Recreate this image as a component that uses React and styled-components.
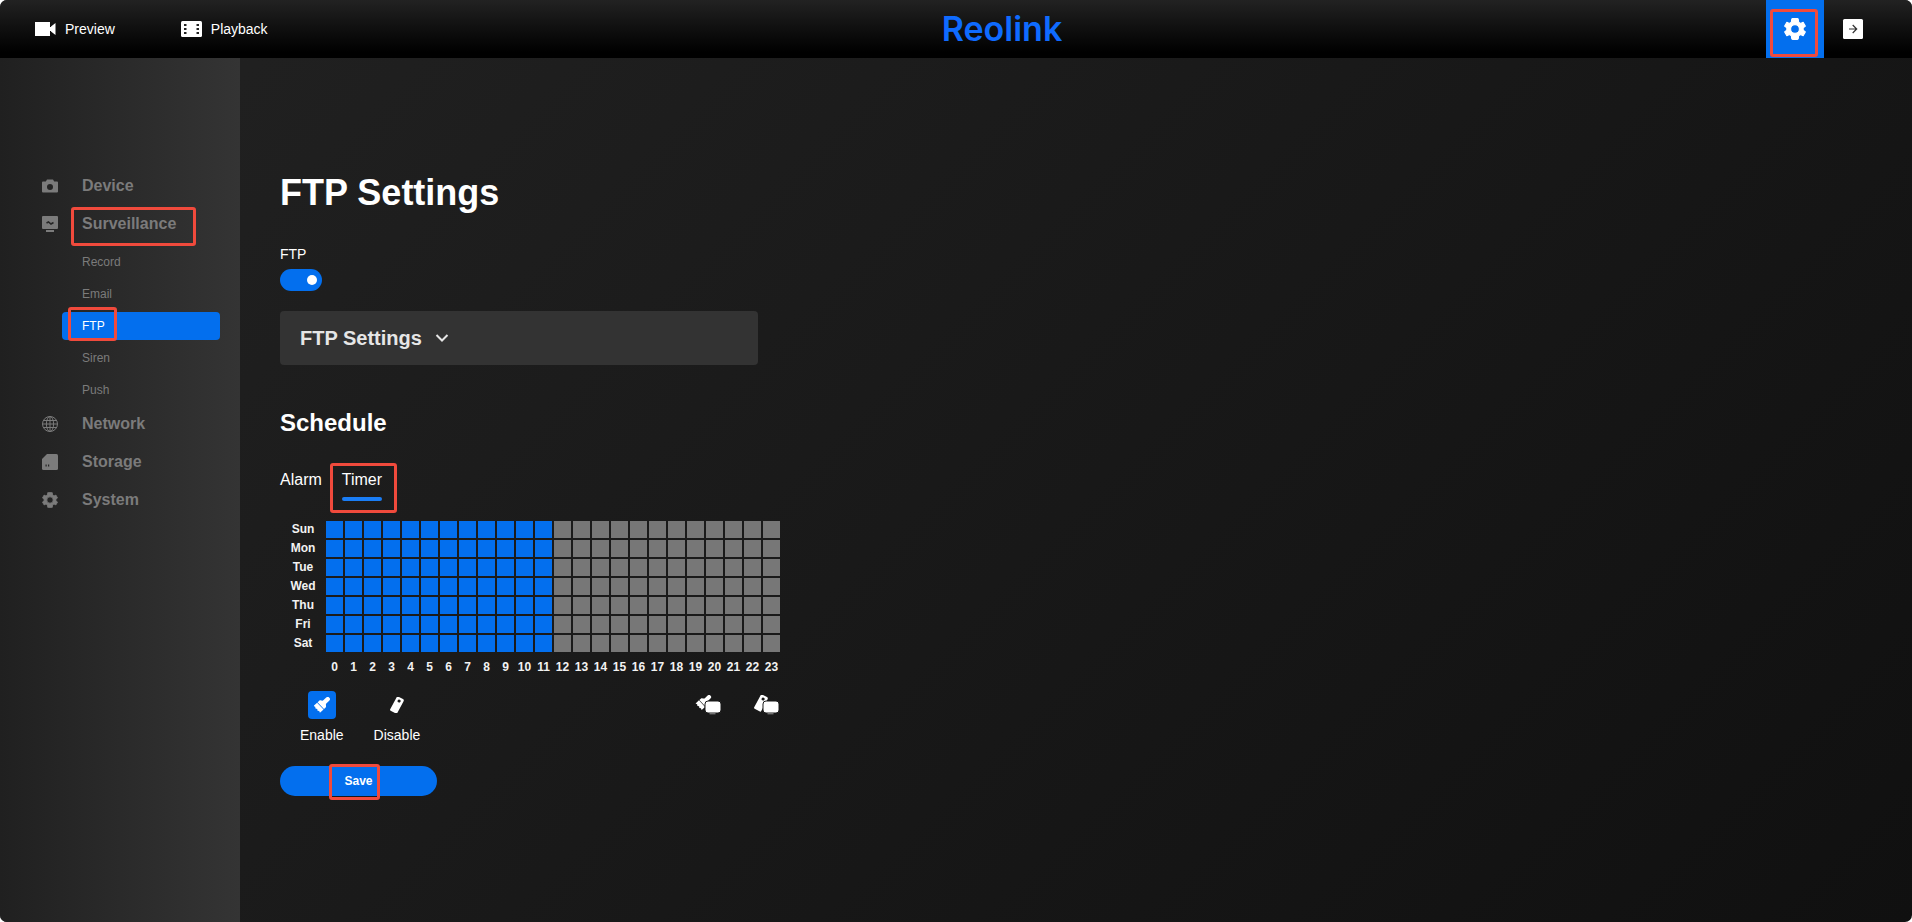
import React, { useState } from 'react'
import styled, { createGlobalStyle } from 'styled-components'

const BLUE = '#036fee'
const MARK = '#f04a3c'

const GlobalStyle = createGlobalStyle`
    * {
        box-sizing: border-box;
    }
    body {
        margin: 0;
        background: #fff;
        font-family: "Liberation Sans", Arial, sans-serif;
    }
    button {
        margin: 0;
        padding: 0;
        border: 0;
        background: none;
        color: inherit;
        font: inherit;
        cursor: pointer;
    }
`;

const Page = styled.div`
    display: flex;
    flex-direction: column;
    min-height: 100vh;
    border-radius: 7px;
    overflow: hidden;
    color: #fff;
    background: linear-gradient(135deg, #222 0%, #101010 100%);
`;

const Header = styled.header`
    display: grid;
    grid-template-columns: 1fr auto 1fr;
    align-items: center;
    height: 58px;
    background: linear-gradient(#222, #000 90%);
`;

const TopNav = styled.nav`
    display: flex;
    align-items: center;
    gap: 66px;
    padding-left: 34px;
`;

const TopLink = styled.a`
    display: flex;
    align-items: center;
    gap: 9px;
    color: #fff;
    font-size: 14px;
    text-decoration: none;
`;

const Logo = styled.div`
    margin-left: 92px;
    color: #0f6bff;
    font-family: Inter, sans-serif;
    font-size: 34px;
    font-weight: 600;
    line-height: 58px;
`;

const Actions = styled.div`
    display: flex;
    justify-content: flex-end;
    padding-right: 30px;
`;

const ActionButton = styled.button`
    position: relative;
    display: flex;
    align-items: center;
    justify-content: center;
    width: 58px;
    height: 58px;
    background: ${props => props.$active ? BLUE : 'transparent'};
`;

const Highlight = styled.span`
    position: absolute;
    top: ${props => props.$top}px;
    left: ${props => props.$left}px;
    width: ${props => props.$width}px;
    height: ${props => props.$height}px;
    border: 3px solid ${MARK};
    border-radius: 3px;
    pointer-events: none;
`;

const Body = styled.div`
    display: flex;
    flex: 1;
`;

const Sidebar = styled.nav`
    flex: none;
    width: 240px;
    padding: 108px 20px 40px 0;
    background: linear-gradient(90deg, #202020, #343434);
`;

const MenuItem = styled.a`
    position: relative;
    display: flex;
    align-items: center;
    gap: 24px;
    height: 38px;
    padding: 2px 0 0 42px;
    color: #7b7b7b;
    font-size: 16px;
    font-weight: bold;
    text-decoration: none;
`;

const SubMenu = styled.div`
    display: flex;
    flex-direction: column;
    gap: 4px;
    padding: 6px 0 0 62px;
`;

const SubItem = styled.a`
    position: relative;
    height: 28px;
    padding-left: 20px;
    border-radius: 4px;
    background: ${props => props.$active ? BLUE : 'transparent'};
    color: ${props => props.$active ? '#fff' : '#7b7b7b'};
    font-size: 12px;
    line-height: 28px;
    text-decoration: none;
`;

const Main = styled.main`
    flex: 1;
    padding: 113px 40px 60px;
`;

const Title = styled.h1`
    margin: 0;
    font-size: 36px;
    line-height: 44px;
`;

const SwitchField = styled.label`
    display: flex;
    flex-direction: column;
    align-items: flex-start;
    gap: 6px;
    margin-top: 31px;
    font-size: 14px;
    line-height: 17px;
`;

const Switch = styled.input`
    appearance: none;
    display: flex;
    align-items: center;
    justify-content: flex-end;
    width: 42px;
    height: 22px;
    margin: 0;
    padding: 0 5px;
    border-radius: 11px;
    background: ${BLUE};
    cursor: pointer;

    &::before {
        content: '';
        width: 10px;
        height: 10px;
        border-radius: 50%;
        background: #fff;
    }
    &:not(:checked) {
        justify-content: flex-start;
        background: #777;
    }
`;

const Panel = styled.button`
    display: flex;
    align-items: center;
    gap: 13px;
    width: 100%;
    max-width: 478px;
    height: 54px;
    margin-top: 20px;
    padding: 0 20px;
    border-radius: 4px;
    background: #333;
    color: #e6e6e6;
    font-size: 20px;
    font-weight: bold;
`;

const Subtitle = styled.h2`
    margin: 44px 0 0;
    font-size: 24px;
    line-height: 28px;
`;

const Tabs = styled.div`
    display: flex;
    gap: 20px;
    margin-top: 34px;
`;

const Tab = styled.button`
    position: relative;
    height: 30px;
    border-bottom: 4px solid transparent;
    font-size: 16px;
    line-height: 18px;
    padding-bottom: 8px;

    &::after {
        content: '';
        position: absolute;
        right: 0;
        bottom: -4px;
        left: 0;
        height: 4px;
        border-radius: 2px;
        background: ${props => props.$active ? '#1a7df5' : 'transparent'};
    }
`;

const Schedule = styled.table`
    width: 502px;
    margin-top: 18px;
    border-spacing: 2px;
    table-layout: fixed;
    font-size: 12px;
    line-height: 17px;
    user-select: none;
`;

const DayCol = styled.col`
    width: 42px;
`;

const Day = styled.th`
    height: 17px;
    padding: 0;
    color: #f2f2f2;
`;

const Hour = styled(Day)`
    height: 27px;
`;

const Slot = styled.td`
    height: 17px;
    padding: 0;
    background: ${props => props.$on ? BLUE : '#777'};
    cursor: pointer;
`;

const Tools = styled.div`
    display: flex;
    align-items: flex-start;
    justify-content: space-between;
    width: 500px;
    margin-top: 8px;
    padding-left: 20px;
`;

const ToolGroup = styled.div`
    display: flex;
    gap: 30px;
`;

const Tool = styled.button`
    display: flex;
    flex-direction: column;
    align-items: center;
    gap: 8px;
    font-size: 14px;
    line-height: 17px;
`;

const ToolIcon = styled.span`
    display: flex;
    align-items: center;
    justify-content: center;
    width: 28px;
    height: 28px;
    border-radius: 4px;
    background: ${props => props.$active ? BLUE : 'transparent'};
`;

const SaveButton = styled.button`
    position: relative;
    display: block;
    width: 157px;
    height: 30px;
    margin-top: 22px;
    border-radius: 15px;
    background: ${BLUE};
    font-size: 12px;
    font-weight: bold;
`;

const PreviewIcon = () => (
    <svg width="22" height="14" viewBox="0 0 22 14" fill="#fff">
        <path d="M1 0h15v14H1zM17 4.500L21.500 1v12L17 9.500z" />
        <path d="M15.500 5h2v4h-2z" />
    </svg>
)

const PlaybackIcon = () => (
    <svg width="21" height="16" viewBox="0 0 21 16">
        <rect width="21" height="16" rx="1.500" fill="#fff" />
        <path d="M3 3h2.500v2H3zM3 7h2.500v2H3zM3 11h2.500v2H3zM15.500 3H18v2h-2.500zM15.500 7H18v2h-2.500zM15.500 11H18v2h-2.500z" fill="#222" />
    </svg>
)

const GearIcon = ({ size }) => (
    <svg width={size} height={size} viewBox="2 2 20 20" fill="currentColor">
        <path fillRule="evenodd" strokeLinejoin="round" stroke="currentColor" strokeWidth="1" d="M19.400 13c.1-.6.1-1.400 0-2l2-1.600-2-3.500-2.400 1c-.5-.4-1.100-.7-1.700-1L15 3.400C14.900 2.600 14.600 2.500 14 2.500h-4c-.6 0-.9.1-1 .9l-.3 2.500c-.6.3-1.200.6-1.700 1l-2.400-1-2 3.500 2 1.600c-.1.6-.1 1.400 0 2l-2 1.600 2 3.500 2.400-1c.5.4 1.100.7 1.700 1l.3 2.500c.1.800.4.9 1 .9h4c.6 0 .9-.1 1-.9l.3-2.500c.6-.3 1.200-.6 1.700-1l2.400 1 2-3.500zM12 16a4 4 0 1 1 0-8 4 4 0 0 1 0 8z" />
    </svg>
)

const ExitIcon = () => (
    <svg width="22" height="20" viewBox="0 0 22 20">
        <rect x="1" width="20" height="20" rx="1.500" fill="#fff" />
        <path d="M7 10h7.500M10.700 6l4 4-4 4" fill="none" stroke="#333" strokeWidth="1.200" />
    </svg>
)

const CameraIcon = () => (
    <svg width="16" height="16" viewBox="0 0 16 16" fill="currentColor">
        <path fillRule="evenodd" d="M5 1.500h6l1.200 2H15a1 1 0 0 1 1 1V13.500a1 1 0 0 1-1 1H1a1 1 0 0 1-1-1V4.500a1 1 0 0 1 1-1h2.800zM8 6a3 3 0 1 0 0 6 3 3 0 0 0 0-6z" />
    </svg>
)

const MonitorIcon = () => (
    <svg width="16" height="16" viewBox="0 0 16 16">
        <path d="M1 0h14a1 1 0 0 1 1 1v11a1 1 0 0 1-1 1H1a1 1 0 0 1-1-1V1a1 1 0 0 1 1-1zM4 14h8v2H4z" fill="currentColor" />
        <path d="M4.500 7l2-1 2.500 2 2.500-1.500" fill="none" stroke="#262626" strokeWidth="1.600" />
    </svg>
)

const GlobeIcon = () => (
    <svg width="16" height="16" viewBox="0 0 16 16" fill="none" stroke="currentColor" strokeWidth="1">
        <circle cx="8" cy="8" r="7.500" />
        <ellipse cx="8" cy="8" rx="3.600" ry="7.500" />
        <path d="M8 0.500v15M0.500 8h15M1.600 4.500h12.800M1.600 11.500h12.800" />
    </svg>
)

const CardIcon = () => (
    <svg width="16" height="16" viewBox="0 0 16 16">
        <path d="M5 0h9.500A1.500 1.500 0 0 1 16 1.500v13a1.500 1.500 0 0 1-1.500 1.500h-13A1.500 1.500 0 0 1 0 14.500V5z" fill="currentColor" />
        <path d="M3.500 10.500h1.200v2H3.500zM6 10.500h1.200v2H6z" fill="#262626" />
    </svg>
)

const ChevronIcon = () => (
    <svg width="14" height="10" viewBox="0 0 14 10" fill="none" stroke="currentColor" strokeWidth="2">
        <path d="M1.500 2L7 7.500 12.500 2" />
    </svg>
)

const BrushShape = () => (
    <g transform="translate(7.500 8) rotate(47)" fill="#fff">
        <path d="M-2.200 -8.500a2.200 2.200 0 0 1 4.400 0V-4.500C2.200 -3 4.700 -3 4.700 -1V1H-4.700V-1C-4.700 -3 -2.200 -3 -2.200 -4.500z" />
        <path d="M-4.700 1.600H4.700V6.500L2.800 5.800 1.500 6.800 0 5.800 -1.500 6.800 -3 5.800 -4.700 6.500z" />
    </g>
)

const BrushIcon = () => (
    <svg width="16" height="16" viewBox="0 0 16 16">
        <BrushShape />
    </svg>
)

const EraserShape = () => (
    <g transform="rotate(28 7 8)">
        <path fillRule="evenodd" d="M4.500 0h5a1.500 1.500 0 0 1 1.500 1.500V15a1 1 0 0 1-1 1H4a1 1 0 0 1-1-1V1.500A1.500 1.500 0 0 1 4.500 0zM7 2a1.500 1.500 0 1 0 0 3 1.500 1.500 0 0 0 0-3z" fill="#fff" />
    </g>
)

const EraserIcon = () => (
    <svg width="14" height="16" viewBox="0 0 14 16">
        <EraserShape />
    </svg>
)

const ScreenShape = () => (
    <g>
        <path d="M14.500 17h6v2.200h-6z" fill="#ccc" />
        <rect x="10" y="6" width="16" height="12" rx="3" fill="#fff" stroke="#1b1b1b" strokeWidth="1" />
    </g>
)

const BrushAllIcon = () => (
    <svg width="26" height="20" viewBox="0 0 26 20">
        <g transform="translate(1 0) scale(.95)"><BrushShape /></g>
        <ScreenShape />
    </svg>
)

const EraserAllIcon = () => (
    <svg width="26" height="20" viewBox="0 0 26 20">
        <g transform="translate(1 0)"><EraserShape /></g>
        <ScreenShape />
    </svg>
)

const days = ['Sun', 'Mon', 'Tue', 'Wed', 'Thu', 'Fri', 'Sat']
const hours = Array.from({ length: 24 }, (_, i) => i)
const subItems = ['Record', 'Email', 'FTP', 'Siren', 'Push']

export default function App() {
    const [slots, setSlots] = useState(() => days.map(() => hours.map(h => h < 12)))
    const [tool, setTool] = useState('enable')

    const paint = (day, hour) => {
        setSlots(slots.map((row, d) => row.map((on, h) => (
            d === day && h === hour ? tool === 'enable' : on
        ))))
    }

    const fill = (on) => setSlots(days.map(() => hours.map(() => on)))

    return (
        <Page>
            <GlobalStyle />
            <Header>
                <TopNav>
                    <TopLink href="#preview"><PreviewIcon />Preview</TopLink>
                    <TopLink href="#playback"><PlaybackIcon />Playback</TopLink>
                </TopNav>
                <Logo>Reolink</Logo>
                <Actions>
                    <ActionButton $active aria-label="Settings">
                        <GearIcon size={22} />
                        <Highlight $top={9} $left={4} $width={48} $height={48} />
                    </ActionButton>
                    <ActionButton aria-label="Log out"><ExitIcon /></ActionButton>
                </Actions>
            </Header>

            <Body>
                <Sidebar>
                    <MenuItem href="#device"><CameraIcon />Device</MenuItem>
                    <MenuItem href="#surveillance">
                        <MonitorIcon />Surveillance
                        <Highlight $top={3} $left={71} $width={125} $height={39} />
                    </MenuItem>
                    <SubMenu>
                        {subItems.map(name => (
                            <SubItem key={name} href={'#' + name.toLowerCase()} $active={name === 'FTP'}>
                                {name}
                                {name === 'FTP' && <Highlight $top={-5} $left={6} $width={49} $height={34} />}
                            </SubItem>
                        ))}
                    </SubMenu>
                    <MenuItem href="#network"><GlobeIcon />Network</MenuItem>
                    <MenuItem href="#storage"><CardIcon />Storage</MenuItem>
                    <MenuItem href="#system"><GearIcon size={16} />System</MenuItem>
                </Sidebar>

                <Main>
                    <Title>FTP Settings</Title>
                    <SwitchField>
                        FTP
                        <Switch type="checkbox" defaultChecked />
                    </SwitchField>
                    <Panel>FTP Settings<ChevronIcon /></Panel>

                    <Subtitle>Schedule</Subtitle>
                    <Tabs>
                        <Tab>Alarm</Tab>
                        <Tab $active>
                            Timer
                            <Highlight $top={-8} $left={-12} $width={67} $height={50} />
                        </Tab>
                    </Tabs>

                    <Schedule>
                        <colgroup>
                            <DayCol />
                            <col span="24" />
                        </colgroup>
                        <tbody>
                            {days.map((day, d) => (
                                <tr key={day}>
                                    <Day scope="row">{day}</Day>
                                    {hours.map(h => (
                                        <Slot key={h} $on={slots[d][h]} onClick={() => paint(d, h)} />
                                    ))}
                                </tr>
                            ))}
                        </tbody>
                        <tfoot>
                            <tr>
                                <td />
                                {hours.map(h => <Hour key={h} scope="col">{h}</Hour>)}
                            </tr>
                        </tfoot>
                    </Schedule>

                    <Tools>
                        <ToolGroup>
                            <Tool onClick={() => setTool('enable')}>
                                <ToolIcon $active={tool === 'enable'}><BrushIcon /></ToolIcon>
                                Enable
                            </Tool>
                            <Tool onClick={() => setTool('disable')}>
                                <ToolIcon $active={tool === 'disable'}><EraserIcon /></ToolIcon>
                                Disable
                            </Tool>
                        </ToolGroup>
                        <ToolGroup>
                            <Tool aria-label="Enable all" onClick={() => fill(true)}>
                                <ToolIcon><BrushAllIcon /></ToolIcon>
                            </Tool>
                            <Tool aria-label="Disable all" onClick={() => fill(false)}>
                                <ToolIcon><EraserAllIcon /></ToolIcon>
                            </Tool>
                        </ToolGroup>
                    </Tools>

                    <SaveButton>
                        Save
                        <Highlight $top={-2} $left={49} $width={51} $height={36} />
                    </SaveButton>
                </Main>
            </Body>
        </Page>
    )
}
